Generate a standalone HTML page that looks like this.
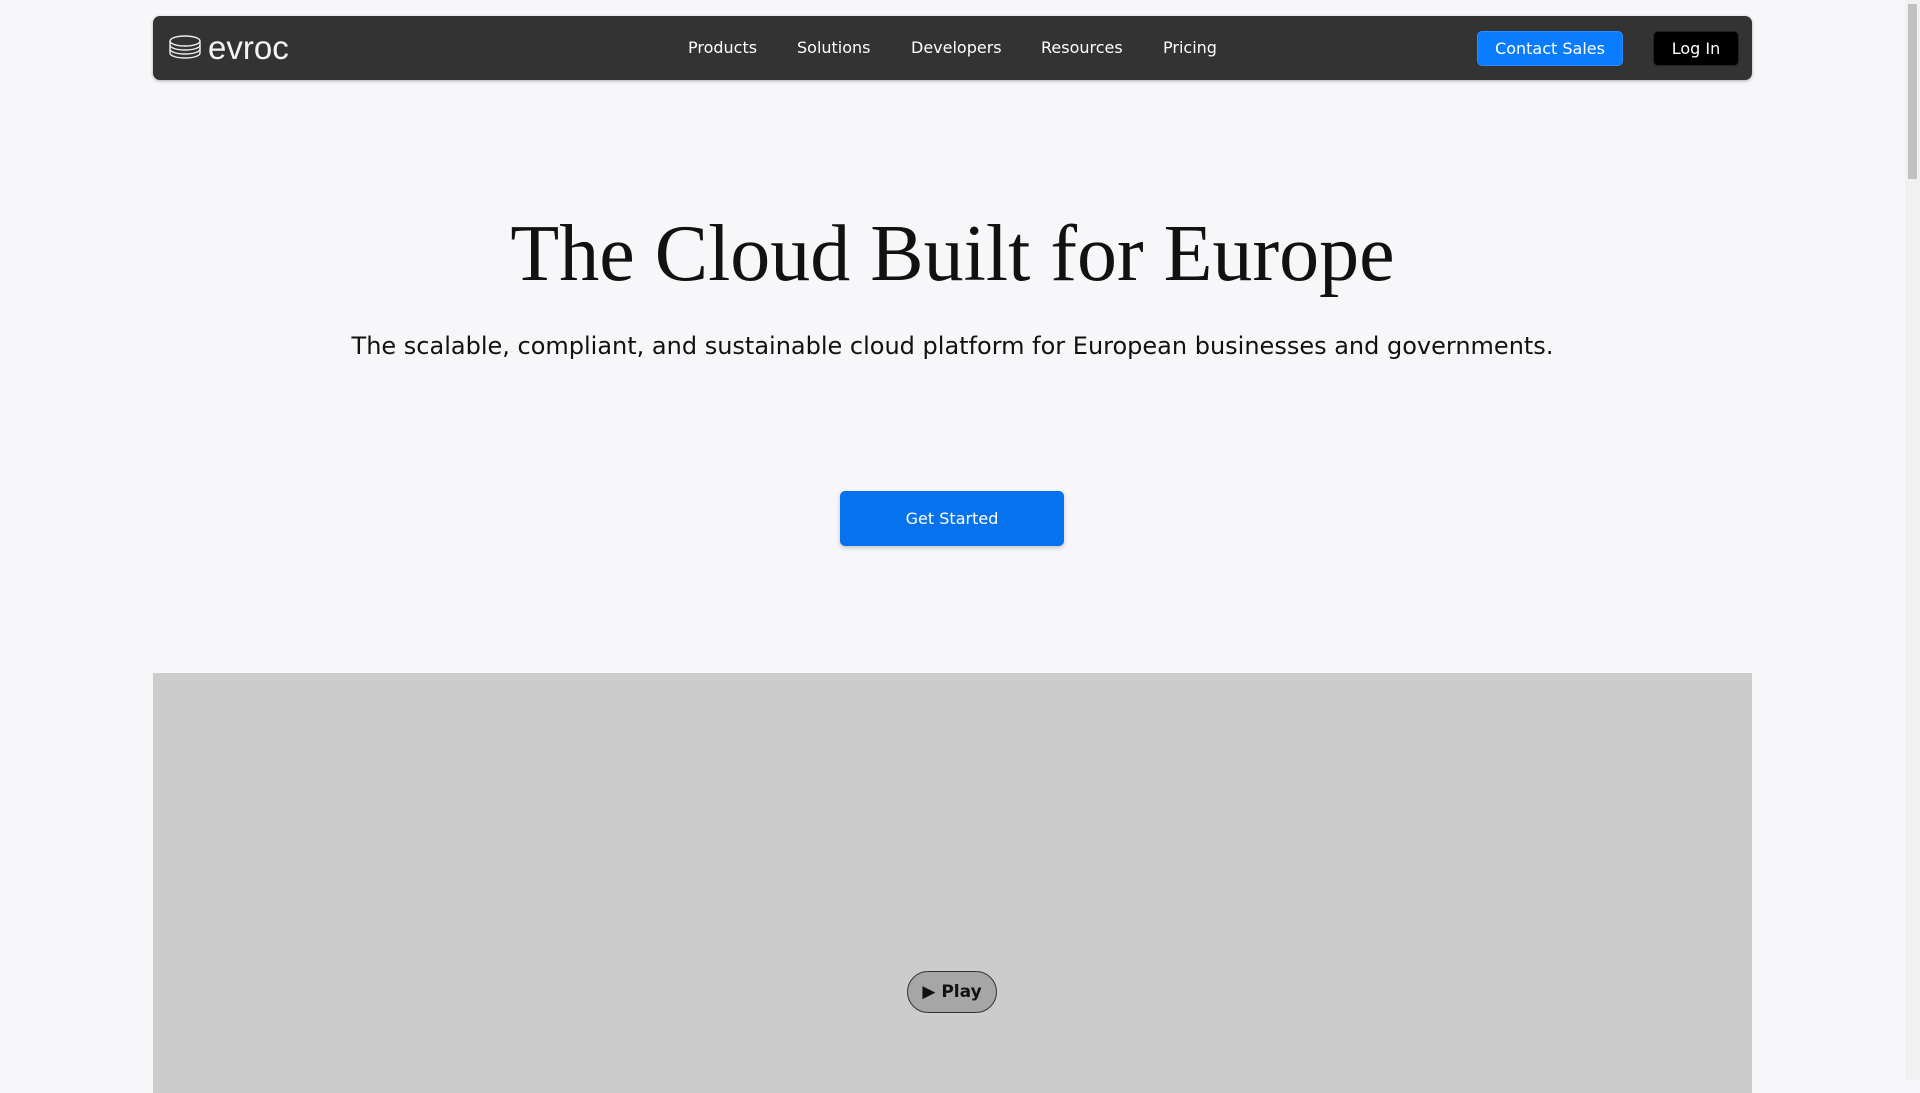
<!DOCTYPE html>
<html><head><style>
html,body{margin:0;padding:0;}
body{width:1920px;height:1080px;background:#f7f7f9;font-family:"DejaVu Sans",sans-serif;overflow:hidden;position:relative;}
.sb{position:absolute;right:0;top:0;width:15px;height:1080px;background:#f1f1f1;}
.sb div{position:absolute;left:3px;top:4px;width:9px;height:175px;background:#c1c1c1;}
nav{position:absolute;left:153px;top:16px;width:1599px;height:64px;background:#333;border-radius:7px;box-shadow:0 1px 3px rgba(0,0,0,.3);}
.logo{position:absolute;left:16px;top:19px;}
.logot{position:absolute;left:55px;top:14px;color:#f4f4f4;font-family:"Liberation Sans",sans-serif;font-size:33px;line-height:36px;}
.links a{position:absolute;top:22px;color:#fff;font-size:16px;text-decoration:none;line-height:20px;}
.btn{position:absolute;top:15px;height:33px;line-height:33px;font-size:16px;color:#fff;text-align:center;border-radius:5px;}
h1{position:absolute;left:0;width:1905px;top:204px;margin:0;text-align:center;font-family:"Liberation Serif",serif;font-weight:normal;font-size:80px;line-height:100px;color:#111;}
p.sub{position:absolute;left:0;width:1905px;top:331px;margin:0;text-align:center;font-size:24px;line-height:30px;color:#111;}
.gs{position:absolute;left:840px;top:491px;width:224px;height:55px;background:#0772ed;border-radius:5px;color:#fff;font-size:16px;line-height:55px;text-align:center;box-shadow:0 2px 4px rgba(0,0,0,.2);}
.vid{position:absolute;left:153px;top:673px;width:1599px;height:420px;background:#cccccc;}
.play{position:absolute;left:907px;top:971px;width:88px;height:40px;border:1px solid #333;border-radius:21px;background:#a6a6a6;color:#111;font-weight:bold;font-size:17px;line-height:40px;text-align:center;}
</style></head><body>
<nav>
<svg class="logo" width="34" height="26" viewBox="0 0 34 26" fill="none" stroke="#eee" stroke-width="1.4"><ellipse cx="16" cy="6" rx="15" ry="5"/><path d="M1 6v4c0 3 7 5 15 5s15-2 15-5V6"/><path d="M1 10v4c0 3 7 5 15 5s15-2 15-5v-4"/><path d="M1 14v4c0 3 7 5 15 5s15-2 15-5v-4"/></svg>
<div class="logot">evroc</div>
<div class="links">
<a style="left:535px">Products</a><a style="left:644px">Solutions</a><a style="left:758px">Developers</a><a style="left:888px">Resources</a><a style="left:1010px">Pricing</a>
</div>
<div class="btn" style="left:1324px;width:144px;background:#0a7cff;border:1px solid #2a8cff;">Contact Sales</div>
<div class="btn" style="left:1500px;width:84px;background:#000;border:1px solid #222;">Log In</div>
</nav>
<h1>The Cloud Built for Europe</h1>
<p class="sub">The scalable, compliant, and sustainable cloud platform for European businesses and governments.</p>
<div class="gs">Get Started</div>
<div class="vid"></div>
<div class="play">▶ Play</div>
<div class="sb"><div></div></div>
</body></html>
